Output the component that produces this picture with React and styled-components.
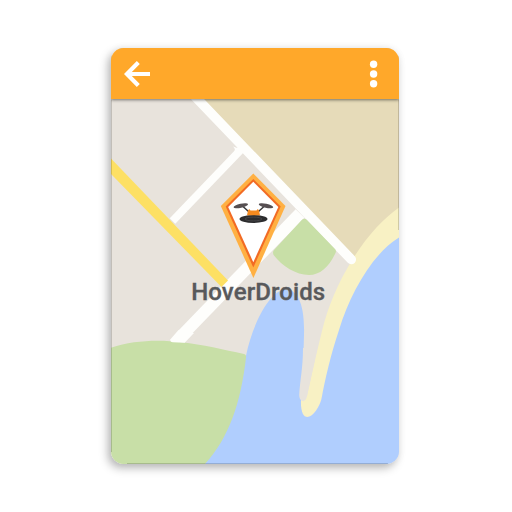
import React from "react";
import styled, { createGlobalStyle } from "styled-components";

const GlobalStyle = createGlobalStyle`
  * { box-sizing: border-box; }
  body { margin: 0; background: #fff; font-family: Roboto, "Liberation Sans", sans-serif; }
`;

const Page = styled.main`
  width: 512px;
  height: 512px;
  padding: 48px 113px 48px 111px;
  background: #fff;
  overflow: hidden;
`;

const Card = styled.section`
  display: flex;
  flex-direction: column;
  height: 416px;
  border-radius: 12.500px;
  overflow: hidden;
  box-shadow: -3px 4px 10px rgba(0, 0, 0, 0.28), 0 0 8px rgba(0, 0, 0, 0.05);
`;

const Toolbar = styled.header`
  position: relative;
  z-index: 1;
  display: flex;
  flex: 0 0 51px;
  align-items: center;
  justify-content: space-between;
  padding: 1px 20px 0 13px;
  background: #ffa82a;
  box-shadow: 0 1px 3px rgba(0, 0, 0, 0.5);
`;

const IconButton = styled.button`
  display: flex;
  padding: 0;
  border: 0;
  background: none;
  color: #fff;
`;

const MapArea = styled.div`
  position: relative;
  flex: 1;
`;

const MapCanvas = styled.svg`
  display: block;
  width: 288px;
  height: 365px;
`;

const PlaceLabel = styled.h1`
  position: absolute;
  left: 80.2px;
  top: 179px;
  margin: 0;
  font-size: 24px;
  line-height: 28px;
  font-weight: 500;
  letter-spacing: 0.1px;
  -webkit-text-stroke: 0.35px #58595b;
  white-space: nowrap;
  color: #58595b;
`;

function BackIcon() {
  return (
    <svg width="28" height="28" viewBox="0 0 28 28" fill="none" stroke="currentColor" strokeWidth="4.2">
      <path d="M26 14H4M14.3 2.6L2.9 14L14.3 25.4" />
    </svg>
  );
}

function MoreIcon() {
  return (
    <svg width="10" height="28" viewBox="0 0 10 28" fill="currentColor">
      <circle cx="4.6" cy="4.2" r="3.7" />
      <circle cx="4.6" cy="14" r="3.7" />
      <circle cx="4.6" cy="23.8" r="3.7" />
    </svg>
  );
}

function Drone() {
  return (
    <g>
      <path d="M243 206.5L248.500 211.500M264 206.500L258.500 211.500" stroke="#39383b" strokeWidth="1.5" />
      <ellipse cx="253.5" cy="219" rx="14" ry="4" fill="#2c2c2e" />
      <ellipse cx="253.5" cy="219" rx="8.5" ry="1.900" fill="none" stroke="#4c4c4e" strokeWidth="0.8" />
      <path d="M247 215.300L248 210.500L249.200 209L250.500 210.500H256.500L257.800 209L259 210.500L260 215.300Z" fill="#f58a1f" />
      <ellipse cx="240.8" cy="205.800" rx="7.4" ry="2" transform="rotate(-12 240.8 205.8)" fill="#564f52" />
      <ellipse cx="266" cy="205.800" rx="7.4" ry="2" transform="rotate(12 266 205.8)" fill="#564f52" />
    </g>
  );
}

function MapDrawing() {
  return (
    <MapCanvas viewBox="111 99 288 365">
      <rect x="111" y="99" width="288" height="365" fill="#e8e3dc" />
      <path d="M198 99H399V230L355 262Z" fill="#e6dbb9" />
      <path d="M399 207.500C384 218 368 235 354 257C337 284 328 307 322 331C316 355 311 378 307 396L301 400C300.500 411 303 417 307.500 417C313 417 320 406 321.500 398L350 340L399 270Z" fill="#f8f1c4" />
      <path d="M399 237.500C372 254 350 294 339 330C331 354 325 379 321.500 399C320 406 313 417 307.500 417C303 417 300.500 411 301 400L303 370L304 335C305 303 297 289.500 286 289.500C270 289.500 252 325 246 356L205 464H399Z" fill="#b0cefe" />
      <path d="M303 348C303 368 300 380 299.200 395C299.500 403 306 403 307 396L318 345Z" fill="#e8e3dc" />
      <g fill="none" stroke="#fefefc">
        <path d="M243 147.500L172.500 221" strokeWidth="7.600" />
        <path d="M300 213.500L183 334.300" strokeWidth="12" />
        <path d="M195.500 97L351.300 259.500" strokeWidth="9.600" strokeLinecap="round" />
        <path d="M233 146.500Q236.500 149.500 233.500 152.500L240 149Z" fill="#fefefc" stroke="none" />
      </g>
      <path d="M111 158.500L228 280.500L221.500 287L111 174Z" fill="#fde064" />
      <path d="M302 219.800Q304.500 217.500 307 220L334.500 248.500Q336.800 250.500 335.500 253C329 267 320 275 309 275C296 275 282 266 274 255.500Q272 252.500 274 250Z" fill="#c8dfa7" />
      <path d="M111 347.700C134 340 159 339.500 182 342.200C202 344.500 224 349.500 244 354Q246.500 354.800 246 357.500C241 402 229 438 205 464H111Z" fill="#c8dfa7" />
      <path d="M178.500 330L170.500 339.300Q169.500 341.800 173 342.300L184.700 342.800L194 333Z" fill="#fefefc" />
      <path d="M111.500 99.500V452M398.500 99.500V230M127 463.500H388" stroke="#000" strokeOpacity=".16" fill="none" />
      <path d="M253.300 173.500L285.500 206L253.400 278L220.800 206Z" fill="#ffb042" />
      <path d="M253.300 179L280.700 206.500L253.300 267.500L225.700 206.500Z" fill="#f26b24" />
      <path d="M253.300 181.800L278.300 207L253.300 262.200L228.200 207Z" fill="#fff" />
      <Drone />
    </MapCanvas>
  );
}

export default function App() {
  return (
    <>
      <GlobalStyle />
      <Page>
        <Card>
          <Toolbar>
            <IconButton aria-label="Back"><BackIcon /></IconButton>
            <IconButton aria-label="More options"><MoreIcon /></IconButton>
          </Toolbar>
          <MapArea>
            <MapDrawing />
            <PlaceLabel>HoverDroids</PlaceLabel>
          </MapArea>
        </Card>
      </Page>
    </>
  );
}
